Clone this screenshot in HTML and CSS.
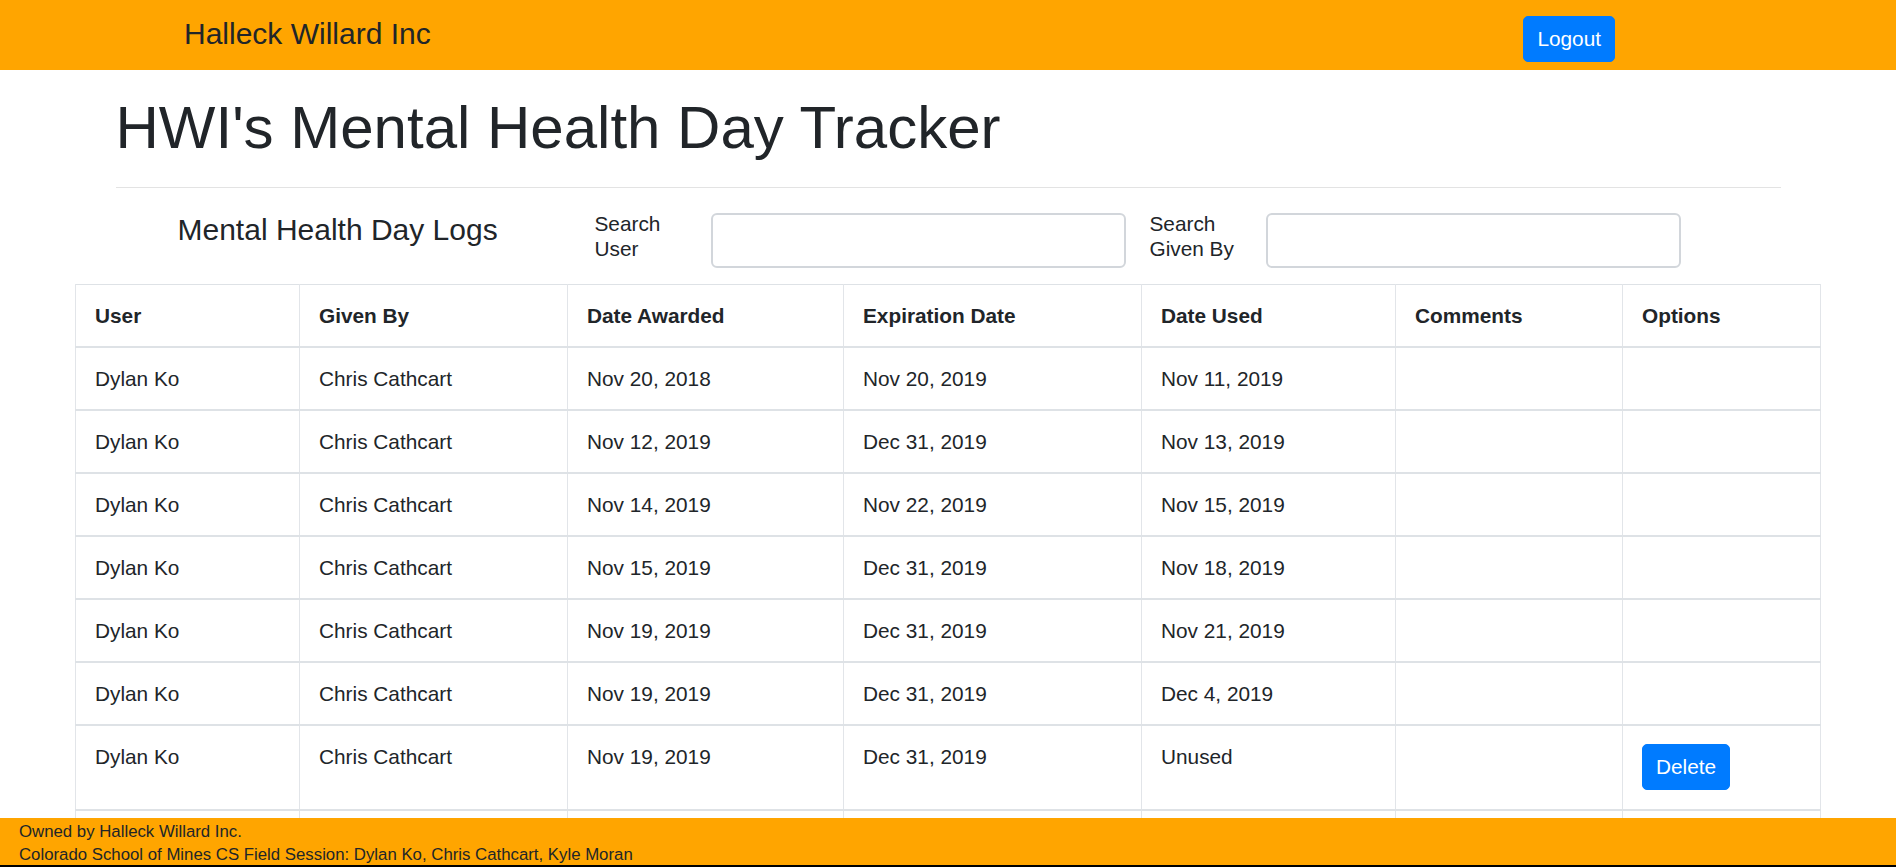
FILE: index.html
```html
<!DOCTYPE html>
<html lang="en">
<head>
<meta charset="utf-8">
<title>HWI's Mental Health Day Tracker</title>
<link rel="stylesheet" href="styles.css">
</head>
<body>
<nav class="navbar">
  <a class="brand" href="#">Halleck Willard Inc</a>
  <button class="btn btn-primary logout" type="button">Logout</button>
</nav>

<main>
  <div class="container">
    <h1 class="page-title">HWI's Mental Health Day Tracker</h1>
    <hr class="divider">
    <div class="search-row">
      <h4 class="logs-title">Mental Health Day Logs</h4>
      <label class="search-label" for="su">Search User</label>
      <input class="search-input" id="su" type="text">
      <label class="search-label second" for="sg">Search Given By</label>
      <input class="search-input" id="sg" type="text">
    </div>
  </div>

  <table class="logs">
    <colgroup>
      <col class="c1"><col class="c2"><col class="c3"><col class="c4"><col class="c5"><col class="c6"><col class="c7">
    </colgroup>
    <thead>
      <tr><th>User</th><th>Given By</th><th>Date Awarded</th><th>Expiration Date</th><th>Date Used</th><th>Comments</th><th>Options</th></tr>
    </thead>
    <tbody>
      <tr><td>Dylan Ko</td><td>Chris Cathcart</td><td>Nov 20, 2018</td><td>Nov 20, 2019</td><td>Nov 11, 2019</td><td></td><td></td></tr>
      <tr><td>Dylan Ko</td><td>Chris Cathcart</td><td>Nov 12, 2019</td><td>Dec 31, 2019</td><td>Nov 13, 2019</td><td></td><td></td></tr>
      <tr><td>Dylan Ko</td><td>Chris Cathcart</td><td>Nov 14, 2019</td><td>Nov 22, 2019</td><td>Nov 15, 2019</td><td></td><td></td></tr>
      <tr><td>Dylan Ko</td><td>Chris Cathcart</td><td>Nov 15, 2019</td><td>Dec 31, 2019</td><td>Nov 18, 2019</td><td></td><td></td></tr>
      <tr><td>Dylan Ko</td><td>Chris Cathcart</td><td>Nov 19, 2019</td><td>Dec 31, 2019</td><td>Nov 21, 2019</td><td></td><td></td></tr>
      <tr><td>Dylan Ko</td><td>Chris Cathcart</td><td>Nov 19, 2019</td><td>Dec 31, 2019</td><td>Dec 4, 2019</td><td></td><td></td></tr>
      <tr><td>Dylan Ko</td><td>Chris Cathcart</td><td>Nov 19, 2019</td><td>Dec 31, 2019</td><td>Unused</td><td></td><td><button class="btn btn-primary delete" type="button">Delete</button></td></tr>
      <tr class="spacer-row"><td></td><td></td><td></td><td></td><td></td><td></td><td></td></tr>
    </tbody>
  </table>
</main>

<footer class="footer">
  <div>Owned by Halleck Willard Inc.</div>
  <div>Colorado School of Mines CS Field Session: Dylan Ko, Chris Cathcart, Kyle Moran</div>
</footer>
</body>
</html>
```

FILE: styles.css
```css
html {
  overflow: hidden;
}

body {
  margin: 0;
  font-family: "Liberation Sans", Arial, sans-serif;
  font-size: 20.8px;
  line-height: 1.5;
  color: #212529;
  background: #fff;
}

.navbar {
  display: flex;
  justify-content: space-between;
  align-items: flex-start;
  box-sizing: border-box;
  height: 70px;
  padding: 16px 281px 0 184px;
  background: #ffa500;
}

.brand {
  font-size: 30px;
  line-height: 36px;
  color: #212529;
  text-decoration: none;
}

.btn {
  display: inline-block;
  box-sizing: border-box;
  height: 46px;
  padding: 0 13px;
  font-family: inherit;
  font-size: 20.8px;
  line-height: 44px;
  border: 1px solid transparent;
  border-radius: 5px;
  cursor: pointer;
}

.btn-primary {
  color: #fff;
  background: #007bff;
  border-color: #007bff;
}

.container {
  width: 1665px;
  margin: 0 auto;
}

.page-title {
  margin: 22px 0 0;
  font-size: 60px;
  font-weight: 400;
  line-height: 72px;
  color: #212529;
}

.divider {
  margin: 23px 0 0;
  border: 0;
  border-top: 1px solid #e3e3e3;
}

.search-row {
  display: flex;
  align-items: flex-start;
  margin-top: 24px;
  padding-left: 62px;
}

.logs-title {
  width: 417px;
  margin: 0;
  font-size: 30px;
  font-weight: 400;
  line-height: 36px;
}

.search-label {
  box-sizing: border-box;
  width: 116px;
  padding-right: 20px;
  font-size: 20.8px;
  line-height: 24.5px;
}

.search-label.second {
  margin-left: 24px;
}

.search-input {
  box-sizing: border-box;
  width: 415px;
  height: 55px;
  margin: 1px 0 0;
  padding: 0 16px;
  font-family: inherit;
  font-size: 20.8px;
  border: 2px solid #d2d6db;
  border-radius: 6px;
  background: #fff;
}

.logs {
  width: 1745px;
  margin: 16px auto 0;
  border-collapse: collapse;
  table-layout: fixed;
  border: 1px solid #dee2e6;
}

.c1 { width: 224px; }
.c2 { width: 268px; }
.c3 { width: 276px; }
.c4 { width: 298px; }
.c5 { width: 254px; }
.c6 { width: 227px; }
.c7 { width: 198px; }

.logs th,
.logs td {
  padding: 15px 19px;
  line-height: 31px;
  text-align: left;
  vertical-align: top;
  border-left: 1px solid #e2e5e9;
  border-right: 1px solid #e2e5e9;
}

.logs th {
  font-weight: 700;
  border-bottom: 2px solid #dee2e6;
}

.logs td {
  border-top: 2px solid #dee2e6;
}

.spacer-row td {
  height: 31px;
}

.delete {
  margin: 3px 0 4px;
  vertical-align: top;
  padding: 0 13px;
}

.footer {
  position: fixed;
  left: 0;
  right: 0;
  bottom: 0;
  box-sizing: border-box;
  height: 49px;
  padding: 3px 0 0 19px;
  font-size: 16.8px;
  line-height: 22.5px;
  color: #212529;
  background: #ffa500;
  border-bottom: 2px solid #000;
}
```
